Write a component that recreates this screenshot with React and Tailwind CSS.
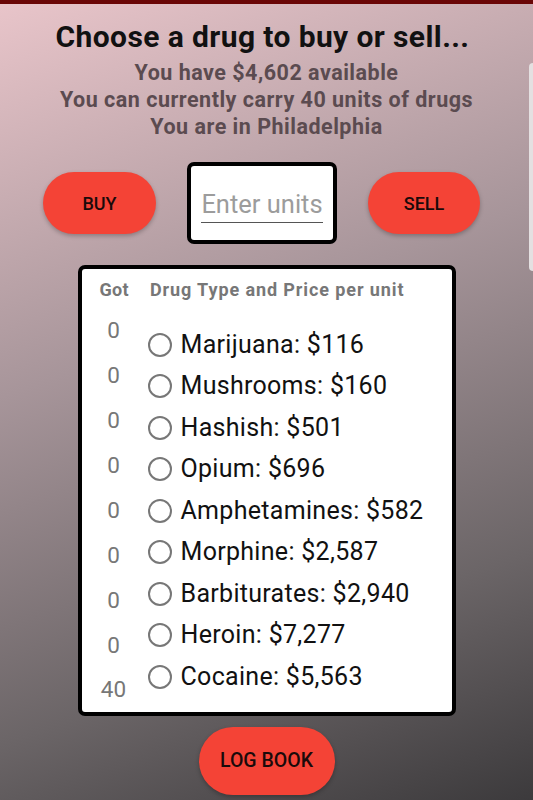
import React from 'react';

const drugs = [
  ['Marijuana', '$116'],
  ['Mushrooms', '$160'],
  ['Hashish', '$501'],
  ['Opium', '$696'],
  ['Amphetamines', '$582'],
  ['Morphine', '$2,587'],
  ['Barbiturates', '$2,940'],
  ['Heroin', '$7,277'],
  ['Cocaine', '$5,563'],
];

const got = ['0', '0', '0', '0', '0', '0', '0', '0', '40'];

const Pill = ({ children, className = '' }) => (
  <button className={`rounded-full bg-[#f44336] text-[#1a0a0a] font-medium shadow-[0_2px_4px_rgba(0,0,0,0.25)] ${className}`}>
    {children}
  </button>
);

export default function App() {
  return (
    <div
      className="relative w-[533px] h-[800px] overflow-hidden bg-[linear-gradient(160deg,#e9c5ca_0%,#a7959a_40%,#6b6567_75%,#3c3a3c_100%)]"
      style={{ fontFamily: 'Roboto, "Noto Sans", sans-serif' }}
    >
      <div className="h-[4px] bg-[#6a0606]" />
      <div className="absolute right-0 top-[63px] w-[4px] h-[208px] rounded-l-md bg-[#e4e0e1]" />

      <div className="flex flex-col items-center">
        <h1 className="mt-[14px] mr-[8px] text-[30px] leading-[38px] font-bold tracking-[0.4px] text-[#111]">Choose a drug to buy or sell...</h1>
        <div className="mt-[3px] flex flex-col items-center text-[21.5px] leading-[27px] font-bold tracking-[0.5px] text-[#5b4b50]">
          <p>You have $4,602 available</p>
          <p>You can currently carry 40 units of drugs</p>
          <p>You are in Philadelphia</p>
        </div>

        <div className="mt-[22px] w-full flex items-center">
          <Pill className="ml-[43px] w-[113px] h-[62px] text-[18px]">BUY</Pill>
          <div className="ml-[31px] w-[150px] h-[82px] rounded-[7px] border-[4px] border-black bg-white flex flex-col items-center justify-center">
            <div className="mt-[6px] w-[122px] border-b border-[#555] pb-[4px] text-center text-[25.5px] leading-[28px] text-[#9c9c9c]">
              Enter units
            </div>
          </div>
          <Pill className="ml-[31px] w-[112px] h-[62px] text-[18px]">SELL</Pill>
        </div>

        <div className="mt-[21px] w-[378px] h-[451px] rounded-[7px] border-[4px] border-black bg-white">
          <div className="flex mt-[9px] text-[18px] leading-[24px] font-bold tracking-[0.9px] text-[#777]">
            <span className="ml-[18px] tracking-[0.3px]">Got</span>
            <span className="ml-[21px]">Drug Type and Price per unit</span>
          </div>
          <div className="flex">
            <div className="w-[70px] flex flex-col items-center pr-[6px] mt-[6px] text-[22.5px] leading-[45px] text-[#777]">
              {got.map((g, i) => (
                <span key={i} className={i === 8 ? 'mt-[-1px]' : ''}>{g}</span>
              ))}
            </div>
            <div className="flex flex-col mt-[22px] -ml-[4px]">
              {drugs.map(([name, price]) => (
                <div key={name} className="h-[41.5px] flex items-center">
                  <span className="w-[24px] h-[24px] rounded-full border-[2.5px] border-[#777] box-border" />
                  <span className="ml-[9px] text-[25px] leading-[30px] tracking-[0.3px] text-[#111]">
                    {name}: {price}
                  </span>
                </div>
              ))}
            </div>
          </div>
        </div>

        <Pill className="mt-[11px] w-[136px] h-[68px] text-[19.5px]">LOG BOOK</Pill>
      </div>
    </div>
  );
}
